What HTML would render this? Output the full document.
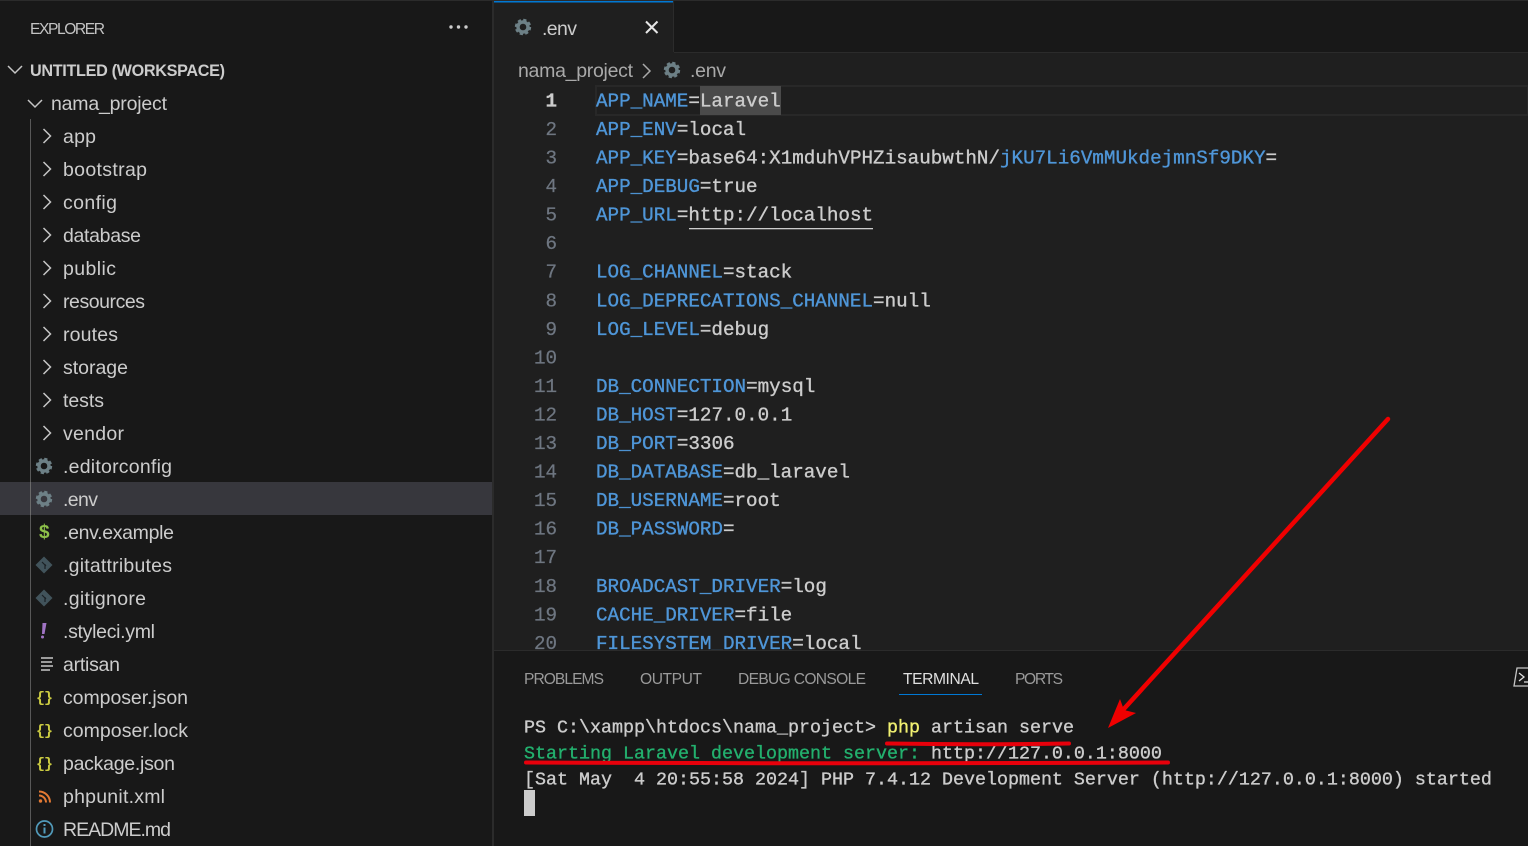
<!DOCTYPE html>
<html lang="en"><head><meta charset="utf-8"><title>.env - Untitled (Workspace)</title>
<style>
html,body{margin:0;padding:0;background:#181818;width:1528px;height:846px;overflow:hidden}
svg{display:block}
text{white-space:pre}
.s{font-family:"Liberation Sans",sans-serif;font-size:19.5px;fill:#cccccc}
.p{font-family:"Liberation Sans",sans-serif;font-size:15.6px;fill:#9a9a9a}
.c{font-family:"Liberation Mono",monospace;font-size:19.24px;fill:#cccccc;stroke:#cccccc;stroke-width:.35px}
.k{fill:#4f96d8;stroke:#4f96d8}
.n{font-family:"Liberation Mono",monospace;font-size:19.2px;fill:#6e7681;stroke:#6e7681;stroke-width:.25px;text-anchor:end}
.t{font-family:"Liberation Mono",monospace;font-size:18.33px;fill:#cccccc;stroke:#cccccc;stroke-width:.35px}
.b{font-family:"Liberation Mono",monospace;font-weight:bold;font-size:15px;fill:#cbcb41}
</style></head><body>
<svg width="1528" height="846" viewBox="0 0 1528 846" xmlns="http://www.w3.org/2000/svg">
<defs>
<g id="gear"><circle r="5" fill="none" stroke="#6d8086" stroke-width="3.4"/><circle r="7" fill="none" stroke="#6d8086" stroke-width="2.4" stroke-dasharray="3.2 2.3"/></g>
<path id="cr" d="M-3.5 -7L3.5 0L-3.5 7" fill="none" stroke="#c5c5c5" stroke-width="1.5"/>
<g id="git"><rect x="-6" y="-6" width="12" height="12" transform="rotate(45)" fill="#41535b"/><path d="M-2 -3L2 1M1 -1V4" stroke="#1a2024" stroke-width="1.2" fill="none"/></g>
</defs>

<rect width="1528" height="846" fill="#181818"/>
<rect x="0" y="0" width="1528" height="1" fill="#2b2b2b"/>

<!-- editor -->
<rect x="494" y="52" width="1034" height="598" fill="#1f1f1f"/>
<rect x="494" y="52" width="1034" height="1" fill="#2b2b2b"/>
<rect x="492" y="0" width="2" height="846" fill="#2b2b2b"/>
<rect x="494" y="1" width="180" height="52" fill="#1f1f1f"/>
<rect x="494" y="1" width="180" height="1.5" fill="#0078d4"/>
<rect x="673" y="1" width="1" height="51" fill="#2b2b2b"/>

<use href="#gear" x="523" y="27"/>
<text class="s" x="542" y="35" textLength="35" lengthAdjust="spacing">.env</text>
<path d="M646 21.500L657.500 33M657.500 21.500L646 33" stroke="#e6e6e6" stroke-width="2" fill="none"/>

<text class="s" x="518" y="77" textLength="115" lengthAdjust="spacing" style="fill:#a9a9a9">nama_project</text>
<path d="M643 64L650 71L643 78" fill="none" stroke="#a9a9a9" stroke-width="1.5"/>
<use href="#gear" x="672" y="70"/>
<text class="s" x="690" y="77" textLength="36" lengthAdjust="spacing" style="fill:#a9a9a9">.env</text>

<rect x="596" y="86" width="932" height="29" fill="none" stroke="#282828" stroke-width="2"/>
<rect x="700" y="86" width="81" height="29" fill="#4a4a4a"/>

<!-- line numbers -->
<text class="n" x="557" y="106.500" style="fill:#cccccc;stroke:#cccccc;font-weight:bold">1</text>
<text class="n" x="557" y="135">2</text>
<text class="n" x="557" y="163.500">3</text>
<text class="n" x="557" y="192">4</text>
<text class="n" x="557" y="220.500">5</text>
<text class="n" x="557" y="249.200">6</text>
<text class="n" x="557" y="277.700">7</text>
<text class="n" x="557" y="306.300">8</text>
<text class="n" x="557" y="334.800">9</text>
<text class="n" x="557" y="363.400">10</text>
<text class="n" x="557" y="391.900">11</text>
<text class="n" x="557" y="420.400">12</text>
<text class="n" x="557" y="449">13</text>
<text class="n" x="557" y="477.600">14</text>
<text class="n" x="557" y="506.100">15</text>
<text class="n" x="557" y="534.700">16</text>
<text class="n" x="557" y="563.200">17</text>
<text class="n" x="557" y="591.800">18</text>
<text class="n" x="557" y="620.400">19</text>
<text class="n" x="557" y="648.900">20</text>

<!-- code -->
<text class="c" x="596" y="106.500"><tspan class="k">APP_NAME</tspan>=Laravel</text>
<text class="c" x="596" y="135"><tspan class="k">APP_ENV</tspan>=local</text>
<text class="c" x="596" y="163.500"><tspan class="k">APP_KEY</tspan>=base64:X1mduhVPHZisaubwthN/<tspan class="k">jKU7Li6VmMUkdejmnSf9DKY</tspan>=</text>
<text class="c" x="596" y="192"><tspan class="k">APP_DEBUG</tspan>=true</text>
<text class="c" x="596" y="220.500"><tspan class="k">APP_URL</tspan>=http://localhost</text>
<rect x="689" y="228" width="184" height="1.300" fill="#cccccc"/>
<text class="c" x="596" y="277.700"><tspan class="k">LOG_CHANNEL</tspan>=stack</text>
<text class="c" x="596" y="306.300"><tspan class="k">LOG_DEPRECATIONS_CHANNEL</tspan>=null</text>
<text class="c" x="596" y="334.800"><tspan class="k">LOG_LEVEL</tspan>=debug</text>
<text class="c" x="596" y="391.900"><tspan class="k">DB_CONNECTION</tspan>=mysql</text>
<text class="c" x="596" y="420.400"><tspan class="k">DB_HOST</tspan>=127.0.0.1</text>
<text class="c" x="596" y="449"><tspan class="k">DB_PORT</tspan>=3306</text>
<text class="c" x="596" y="477.600"><tspan class="k">DB_DATABASE</tspan>=db_laravel</text>
<text class="c" x="596" y="506.100"><tspan class="k">DB_USERNAME</tspan>=root</text>
<text class="c" x="596" y="534.700"><tspan class="k">DB_PASSWORD</tspan>=</text>
<text class="c" x="596" y="591.800"><tspan class="k">BROADCAST_DRIVER</tspan>=log</text>
<text class="c" x="596" y="620.400"><tspan class="k">CACHE_DRIVER</tspan>=file</text>
<text class="c" x="596" y="648.900"><tspan class="k">FILESYSTEM_DRIVER</tspan>=local</text>

<!-- panel -->
<rect x="494" y="650" width="1034" height="196" fill="#181818"/>
<rect x="494" y="650" width="1034" height="1" fill="#2b2b2b"/>
<text class="p" x="524" y="684" textLength="80" lengthAdjust="spacing">PROBLEMS</text>
<text class="p" x="640" y="684" textLength="62" lengthAdjust="spacing">OUTPUT</text>
<text class="p" x="738" y="684" textLength="128" lengthAdjust="spacing">DEBUG CONSOLE</text>
<text class="p" x="903" y="684" textLength="76" lengthAdjust="spacing" style="fill:#e0e0e0">TERMINAL</text>
<text class="p" x="1015" y="684" textLength="48" lengthAdjust="spacing">PORTS</text>
<rect x="899" y="694" width="83" height="1" fill="#0078d4"/>
<path d="M1517 668H1530V686H1514Z" fill="none" stroke="#c5c5c5" stroke-width="1.300"/>
<path d="M1519 673L1524 677L1519 681M1524 682H1528" fill="none" stroke="#e0e0e0" stroke-width="1.300"/>

<text class="t" x="524" y="732.500">PS C:\xampp\htdocs\nama_project&gt; <tspan style="fill:#f1f171;stroke:#f1f171">php</tspan> artisan serve</text>
<text class="t" x="524" y="758.500"><tspan style="fill:#23b06e;stroke:#23b06e">Starting Laravel development server:</tspan> http://127.0.0.1:8000</text>
<text class="t" x="524" y="784.500">[Sat May  4 20:55:58 2024] PHP 7.4.12 Development Server (http://127.0.0.1:8000) started</text>
<rect x="524" y="790" width="11" height="26" fill="#cccccc"/>

<!-- sidebar -->
<text class="s" x="30" y="34" textLength="75" lengthAdjust="spacing" style="font-size:15.6px;fill:#c4c4c4">EXPLORER</text>
<circle cx="451" cy="27" r="1.700" fill="#cccccc"/><circle cx="458.500" cy="27" r="1.700" fill="#cccccc"/><circle cx="466" cy="27" r="1.700" fill="#cccccc"/>
<path d="M8 66L15 73L22 66" fill="none" stroke="#c5c5c5" stroke-width="1.500"/>
<text class="s" x="30" y="76" textLength="195" lengthAdjust="spacing" style="font-size:16.2px;font-weight:bold">UNTITLED (WORKSPACE)</text>
<path d="M28 100L35 107L42 100" fill="none" stroke="#c5c5c5" stroke-width="1.500"/>
<text class="s" x="51" y="110" textLength="116" lengthAdjust="spacing">nama_project</text>
<rect x="30" y="119" width="1" height="727" fill="#585858"/>
<rect x="0" y="482" width="492" height="33" fill="#37373d"/>
<rect x="30" y="482" width="1" height="33" fill="#6a6a6a"/>

<use href="#cr" x="47" y="136"/><text class="s" x="63" y="143" textLength="33" lengthAdjust="spacing">app</text>
<use href="#cr" x="47" y="169"/><text class="s" x="63" y="176" textLength="84" lengthAdjust="spacing">bootstrap</text>
<use href="#cr" x="47" y="202"/><text class="s" x="63" y="209" textLength="54" lengthAdjust="spacing">config</text>
<use href="#cr" x="47" y="235"/><text class="s" x="63" y="242" textLength="78" lengthAdjust="spacing">database</text>
<use href="#cr" x="47" y="268"/><text class="s" x="63" y="275" textLength="53" lengthAdjust="spacing">public</text>
<use href="#cr" x="47" y="301"/><text class="s" x="63" y="308" textLength="82" lengthAdjust="spacing">resources</text>
<use href="#cr" x="47" y="334"/><text class="s" x="63" y="341" textLength="55" lengthAdjust="spacing">routes</text>
<use href="#cr" x="47" y="367"/><text class="s" x="63" y="374" textLength="65" lengthAdjust="spacing">storage</text>
<use href="#cr" x="47" y="400"/><text class="s" x="63" y="407" textLength="41" lengthAdjust="spacing">tests</text>
<use href="#cr" x="47" y="433"/><text class="s" x="63" y="440" textLength="61" lengthAdjust="spacing">vendor</text>

<use href="#gear" x="44" y="466"/><text class="s" x="63" y="473" textLength="109" lengthAdjust="spacing">.editorconfig</text>
<use href="#gear" x="44" y="499"/><text class="s" x="63" y="506" textLength="35" lengthAdjust="spacing">.env</text>
<text x="39" y="538" style="font-family:'Liberation Sans',sans-serif;font-weight:bold;font-size:19px;fill:#8dc149">$</text>
<text class="s" x="63" y="539" textLength="111" lengthAdjust="spacing">.env.example</text>
<use href="#git" x="44" y="565"/><text class="s" x="63" y="572" textLength="109" lengthAdjust="spacing">.gitattributes</text>
<use href="#git" x="44" y="598"/><text class="s" x="63" y="605" textLength="83" lengthAdjust="spacing">.gitignore</text>
<path d="M42.500 623H46.500L44.500 634H42Z" fill="#a074c4"/><circle cx="42.500" cy="637" r="1.500" fill="#a074c4"/>
<text class="s" x="63" y="638" textLength="92" lengthAdjust="spacing">.styleci.yml</text>
<path d="M41 658H53M41 662H52M41 666H53M41 670H50" stroke="#c8c8c8" stroke-width="1.500" fill="none"/>
<text class="s" x="63" y="671" textLength="57" lengthAdjust="spacing">artisan</text>
<text class="b" x="36" y="702" textLength="17" lengthAdjust="spacing">{ }</text>
<text class="s" x="63" y="704" textLength="125" lengthAdjust="spacing">composer.json</text>
<text class="b" x="36" y="735" textLength="17" lengthAdjust="spacing">{ }</text>
<text class="s" x="63" y="737" textLength="125" lengthAdjust="spacing">composer.lock</text>
<text class="b" x="36" y="768" textLength="17" lengthAdjust="spacing">{ }</text>
<text class="s" x="63" y="770" textLength="112" lengthAdjust="spacing">package.json</text>
<circle cx="40.500" cy="801" r="1.700" fill="#e37933"/>
<path d="M39 795.500A7 7 0 0 1 46 802.500M39 791.500A11 11 0 0 1 50 802.500" fill="none" stroke="#e37933" stroke-width="2"/>
<text class="s" x="63" y="803" textLength="102" lengthAdjust="spacing">phpunit.xml</text>
<circle cx="44.500" cy="829" r="8" fill="none" stroke="#519aba" stroke-width="1.700"/>
<rect x="43.500" y="824" width="2" height="2" fill="#519aba"/><rect x="43.500" y="827.500" width="2" height="6" fill="#519aba"/>
<text class="s" x="63" y="836" textLength="108" lengthAdjust="spacing">README.md</text>

<!-- red annotations -->
<path d="M887 743.500Q975 745 1069 743.500" fill="none" stroke="#e8000b" stroke-width="4" stroke-linecap="round"/>
<path d="M526 762.500Q850 764 1168 762.500" fill="none" stroke="#e8000b" stroke-width="4" stroke-linecap="round"/>
<path d="M1388 419L1122 711" fill="none" stroke="#f00000" stroke-width="4.500" stroke-linecap="round"/>
<path d="M1108 728L1120 699L1124 710L1136 713Z" fill="#f00000"/>
</svg>
</body></html>
